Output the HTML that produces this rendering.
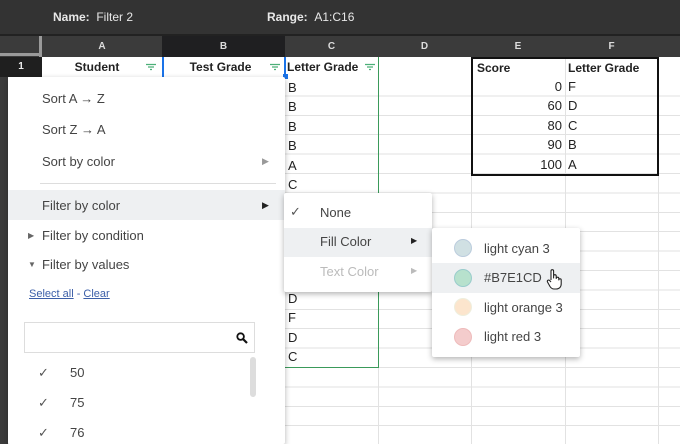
<!DOCTYPE html>
<html><head><meta charset="utf-8"><style>
*{margin:0;padding:0;box-sizing:border-box}
html,body{width:680px;height:444px;overflow:hidden}
body{position:relative;font-family:"Liberation Sans",Arial,sans-serif;background:#fff}
.a{position:absolute}
.grid{left:0;top:77px;width:680px;height:367px;
background-image:repeating-linear-gradient(to bottom,transparent 0,transparent 18.4px,#e2e2e2 18.4px,#e2e2e2 19.4px);}
.vl{position:absolute;top:57px;bottom:0;width:1px;background:#e2e2e2}
.hdr{top:36px;height:21px;background:#3b3b3b;color:#ddd;font-size:10px;font-weight:bold;text-align:center;line-height:21px}
.t{font-size:13px;color:#222}
.b{font-size:12px!important;font-weight:bold}
.menu{background:#fff;box-shadow:0 2px 6px rgba(0,0,0,.3);border-radius:2px;overflow:hidden}
.mi{position:absolute;font-size:13px;color:#444}
.dot{position:absolute;width:18px;height:18px;border-radius:50%;left:22px}
</style></head><body>
<div class="a grid"></div>
<div class="vl" style="left:378px"></div><div class="vl" style="left:471px"></div><div class="vl" style="left:565px"></div><div class="vl" style="left:658px"></div>
<div class="a" style="left:0;top:0;width:680px;height:36px;background:#333;color:#e8e8e8;font-size:12px;line-height:34px">
<span class="a" style="left:53px"><b>Name:</b>&nbsp;&nbsp;Filter 2</span>
<span class="a" style="left:267px"><b>Range:</b>&nbsp;&nbsp;A1:C16</span></div>
<div class="a" style="left:0;top:34px;width:680px;height:2px;background:#222"></div>
<div class="a hdr" style="left:0;width:42px;background:#3b3b3b"></div>
<div class="a" style="left:39px;top:36px;width:3px;height:21px;background:#9a9a9a"></div>
<div class="a" style="left:0;top:53px;width:42px;height:3px;background:#9a9a9a"></div>
<div class="a hdr" style="left:42px;width:120px">A</div>
<div class="a hdr" style="left:162px;width:123px;background:#1f1f21">B</div>
<div class="a hdr" style="left:285px;width:93px">C</div>
<div class="a hdr" style="left:378px;width:93px">D</div>
<div class="a hdr" style="left:471px;width:94px">E</div>
<div class="a hdr" style="left:565px;width:93px">F</div>
<div class="a hdr" style="left:658px;width:22px"></div>
<div class="a" style="left:0;top:57px;width:42px;height:20px;background:#1f1f1f;color:#eee;font-size:10px;font-weight:bold;text-align:center;line-height:20px">1</div>
<div class="a" style="left:0;top:77px;width:8px;height:367px;background:#3b3b3b"></div>
<div class="a t b" style="left:42px;top:57px;width:120px;height:20px;line-height:20px;text-align:center;padding-right:10px">Student</div>
<svg class="a" style="left:145px;top:63px" width="12" height="8"><path d="M1 1.5H11M3 4H9M5 6.5H7" stroke="#4caf78" stroke-width="1.3"/></svg>
<div class="a t b" style="left:162px;top:57px;width:123px;height:20px;line-height:20px;text-align:center;padding-right:8px;border-left:2px solid #1a73e8">Test Grade</div>
<svg class="a" style="left:269px;top:63px" width="12" height="8"><path d="M1 1.5H11M3 4H9M5 6.5H7" stroke="#4caf78" stroke-width="1.3"/></svg>
<div class="a" style="left:284px;top:57px;width:2px;height:20px;background:#1a73e8"></div>
<div class="a" style="left:283px;top:74px;width:5px;height:5px;background:#1a73e8"></div>
<div class="a t b" style="left:287px;top:57px;line-height:20px">Letter Grade</div>
<svg class="a" style="left:364px;top:63px" width="12" height="8"><path d="M1 1.5H11M3 4H9M5 6.5H7" stroke="#4caf78" stroke-width="1.3"/></svg>
<div class="a" style="left:378px;top:57px;width:1px;height:311px;background:#3a9a5a"></div>
<div class="a" style="left:285px;top:367px;width:94px;height:1px;background:#3a9a5a"></div>
<div class="a t" style="left:288px;top:78px;line-height:19.4px">B<br>B<br>B<br>B<br>A<br>C</div>
<div class="a t" style="left:288px;top:289px;line-height:19.4px">D<br>F<br>D<br>C</div>
<div class="a" style="left:471px;top:57px;width:188px;height:119px;border:2px solid #111"></div>
<div class="a t b" style="left:477px;top:60px;line-height:16px">Score</div>
<div class="a t b" style="left:568px;top:60px;line-height:16px">Letter Grade</div>
<div class="a t" style="left:473px;top:77px;width:89px;text-align:right;line-height:19.4px">0<br>60<br>80<br>90<br>100</div>
<div class="a t" style="left:568px;top:77px;line-height:19.4px">F<br>D<br>C<br>B<br>A</div>
<div class="a menu" style="left:8px;top:77px;width:277px;height:367px">
<div class="mi" style="left:34px;top:14px">Sort A → Z</div>
<div class="mi" style="left:34px;top:45px">Sort Z → A</div>
<div class="mi" style="left:34px;top:77px">Sort by color</div>
<div class="mi" style="left:254px;top:79px;font-size:9px;color:#999">▶</div>
<div class="a" style="left:32px;top:106px;width:236px;height:1px;background:#ddd"></div>
<div class="a" style="left:0;top:113px;width:277px;height:30px;background:#eef0f2"></div>
<div class="mi" style="left:34px;top:121px">Filter by color</div>
<div class="mi" style="left:254px;top:123px;font-size:9px;color:#222">▶</div>
<div class="mi" style="left:20px;top:154px;font-size:8px;color:#666">▶</div>
<div class="mi" style="left:34px;top:151px">Filter by condition</div>
<div class="mi" style="left:20px;top:183px;font-size:8px;color:#666">▼</div>
<div class="mi" style="left:34px;top:180px">Filter by values</div>
<div class="mi" style="left:21px;top:211px;font-size:11px;color:#3c5fa8"><u>Select all</u> - <u>Clear</u></div>
<div class="a" style="left:16px;top:245px;width:231px;height:31px;border:1px solid #ddd"></div>
<svg class="a" style="left:228px;top:255px" width="12" height="12" viewBox="0 0 12 12"><circle cx="4.6" cy="4.6" r="3.3" fill="none" stroke="#111" stroke-width="1.8"/><path d="M7 7L11 11" stroke="#111" stroke-width="2.2"/></svg>
<div class="a" style="left:242px;top:280px;width:6px;height:40px;background:#ddd;border-radius:3px"></div>
<div class="mi" style="left:30px;top:288px;color:#555">✓</div><div class="mi" style="left:62px;top:288px">50</div>
<div class="mi" style="left:30px;top:318px;color:#555">✓</div><div class="mi" style="left:62px;top:318px">75</div>
<div class="mi" style="left:30px;top:348px;color:#555">✓</div><div class="mi" style="left:62px;top:348px">76</div>
</div>
<div class="a menu" style="left:284px;top:193px;width:148px;height:99px">
<div class="mi" style="left:6px;top:11px;color:#555">✓</div>
<div class="mi" style="left:36px;top:12px">None</div>
<div class="a" style="left:0;top:35px;width:148px;height:29px;background:#eef0f2"></div>
<div class="mi" style="left:36px;top:41px">Fill Color</div>
<div class="mi" style="left:127px;top:43px;font-size:8px;color:#222">▶</div>
<div class="mi" style="left:36px;top:71px;color:#bbb">Text Color</div>
<div class="mi" style="left:127px;top:73px;font-size:8px;color:#bbb">▶</div>
</div>
<div class="a menu" style="left:432px;top:228px;width:148px;height:129px">
<div class="dot" style="top:11px;background:#d0e0e3;border:1px solid #bcd"></div>
<div class="mi" style="left:52px;top:13px">light cyan 3</div>
<div class="a" style="left:0;top:35px;width:148px;height:30px;background:#eef0f2"></div>
<div class="dot" style="top:41px;background:#b7e1cd;border:1px solid #9cc"></div>
<div class="mi" style="left:52px;top:42px">#B7E1CD</div>
<svg class="a" style="left:114px;top:40px" width="16" height="22" viewBox="0 0 16 22"><path d="M5 12V3a1.3 1.3 0 0 1 2.6 0v7V8a1.3 1.3 0 0 1 2.6 0v2.5a1.3 1.3 0 0 1 2.6 0V12a1.2 1.2 0 0 1 2.4 0v4c0 3-2 5-5 5H8c-2 0-3-1-4-2.5L1.5 14a1.3 1.3 0 0 1 2-1.6L5 14" fill="#fff" stroke="#222" stroke-width="1.1" stroke-linejoin="round"/></svg>
<div class="dot" style="top:70px;background:#fce5cd;border:1px solid #eed"></div>
<div class="mi" style="left:52px;top:72px">light orange 3</div>
<div class="dot" style="top:100px;background:#f4cccc;border:1px solid #ebb"></div>
<div class="mi" style="left:52px;top:101px">light red 3</div>
</div>
</body></html>
